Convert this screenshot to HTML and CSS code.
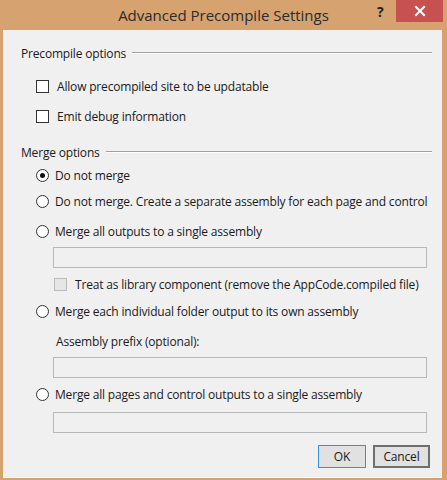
FILE: index.html
```html
<!DOCTYPE html>
<html>
<head>
<meta charset="utf-8">
<link rel="stylesheet" href="styles.css">
</head>
<body>
<div class="window">
  <div class="titlebar">
    <div class="title">Advanced Precompile Settings</div>
    <div class="help">?</div>
    <div class="close">
      <svg width="12" height="12" viewBox="0 0 12 12"><path d="M2 2 L10 10 M10 2 L2 10" stroke="#fff" stroke-width="2" stroke-linecap="square"/></svg>
    </div>
  </div>
  <div class="client">
    <div class="group-head g1"><span>Precompile options</span><div class="rule"></div></div>
    <div class="row chk-row r-cb1"><span class="cbox"></span><span class="lbl">Allow precompiled site to be updatable</span></div>
    <div class="row chk-row r-cb2"><span class="cbox"></span><span class="lbl">Emit debug information</span></div>
    <div class="group-head g2"><span>Merge options</span><div class="rule"></div></div>
    <div class="row radio-row r-rb1"><span class="radio checked"></span><span class="lbl">Do not merge</span></div>
    <div class="row radio-row r-rb2"><span class="radio"></span><span class="lbl">Do not merge. Create a separate assembly for each page and control</span></div>
    <div class="row radio-row r-rb3"><span class="radio"></span><span class="lbl">Merge all outputs to a single assembly</span></div>
    <div class="textbox t1"></div>
    <div class="row sub-chk r-treat"><span class="cbox disabled"></span><span class="lbl">Treat as library component (remove the AppCode.compiled file)</span></div>
    <div class="row radio-row r-rb4"><span class="radio"></span><span class="lbl">Merge each individual folder output to its own assembly</span></div>
    <div class="row label-row r-lbl"><span class="lbl">Assembly prefix (optional):</span></div>
    <div class="textbox t2"></div>
    <div class="row radio-row r-rb5"><span class="radio"></span><span class="lbl">Merge all pages and control outputs to a single assembly</span></div>
    <div class="textbox t3"></div>
    <div class="buttons">
      <button class="btn ok">OK</button>
      <button class="btn cancel">Cancel</button>
    </div>
  </div>
</div>
</body>
</html>
```
FILE: styles.css
```css
html, body {
  margin: 0;
  padding: 0;
}
body {
  width: 447px;
  height: 480px;
  background: #d6a26f;
  font-family: "Open Sans", "Noto Sans", sans-serif;
  overflow: hidden;
}
.window {
  display: flex;
  flex-direction: column;
  height: 480px;
}
.titlebar {
  height: 30px;
  position: relative;
  flex: none;
}
.title {
  text-align: center;
  font-size: 15px;
  color: #2b2b2b;
  padding-top: 5px;
  line-height: 20px;
}
.help {
  position: absolute;
  left: 377px;
  top: 3px;
  font-size: 14px;
  font-weight: bold;
  color: #222;
  line-height: 18px;
}
.close {
  position: absolute;
  left: 396px;
  top: 0;
  width: 47px;
  height: 22px;
  background: #c75050;
  display: flex;
  align-items: center;
  justify-content: center;
}
.close svg { display: block; }
.client {
  flex: none;
  margin: 0 5px 0 3px;
  height: 448px;
  background: #f0f0f0;
  border-bottom: 1px solid #fafafa;
  box-sizing: border-box;
  padding-top: 13px;
  font-size: 12px;
  letter-spacing: -0.18px;
  color: #1a1a1a;
  display: flex;
  flex-direction: column;
}
.group-head {
  height: 20px;
  display: flex;
  align-items: center;
  padding-left: 18px;
  padding-right: 10px;
  gap: 6px;
}
.group-head .rule {
  flex: 1;
  height: 1px;
  background: #a0a0a0;
  border-bottom: 1px solid #fff;
}
.row {
  height: 20px;
  display: flex;
  align-items: center;
}
.chk-row { padding-left: 33px; gap: 8px; }
.radio-row { padding-left: 33px; gap: 6px; }
.sub-chk { padding-left: 51px; gap: 8px; }
.label-row { padding-left: 53px; }
.cbox {
  width: 13px;
  height: 13px;
  box-sizing: border-box;
  border: 1px solid #333;
  background: #fff;
  flex: none;
}
.cbox.disabled {
  border-color: #bcbcbc;
  background: #e6e6e6;
}
.radio {
  width: 13px;
  height: 13px;
  box-sizing: border-box;
  border: 1px solid #333;
  border-radius: 50%;
  background: #fff;
  flex: none;
  display: flex;
  align-items: center;
  justify-content: center;
}
.radio.checked::after {
  content: "";
  width: 5px;
  height: 5px;
  border-radius: 50%;
  background: #111;
}
.textbox {
  margin-left: 50px;
  width: 374px;
  height: 21px;
  box-sizing: border-box;
  border: 1px solid #b8b8b8;
  background: #f0f0f0;
  flex: none;
}
.r-cb1 { margin-top: 13px; }
.r-cb2 { margin-top: 10px; }
.g2 { margin-top: 16px; }
.r-rb1 { margin-top: 3px; }
.r-rb2 { margin-top: 6px; }
.r-rb3 { margin-top: 10px; }
.t1 { margin-top: 6px; }
.r-treat { margin-top: 6px; }
.r-rb4 { margin-top: 7px; }
.r-lbl { margin-top: 10px; }
.t2 { margin-top: 6px; }
.r-rb5 { margin-top: 6px; }
.t3 { margin-top: 8px; }
.buttons {
  margin-top: 12px;
  display: flex;
  justify-content: flex-end;
  gap: 7px;
  padding-right: 12px;
}
.btn {
  height: 23px;
  box-sizing: border-box;
  background: #e1e1e1;
  font-family: inherit;
  font-size: 12px;
  letter-spacing: -0.18px;
  color: #1a1a1a;
  padding: 0;
}
.ok {
  width: 48px;
  border: 1px solid #3c8fd9;
}
.cancel {
  width: 57px;
  border: 2px solid #6f6f6f;
}
```
